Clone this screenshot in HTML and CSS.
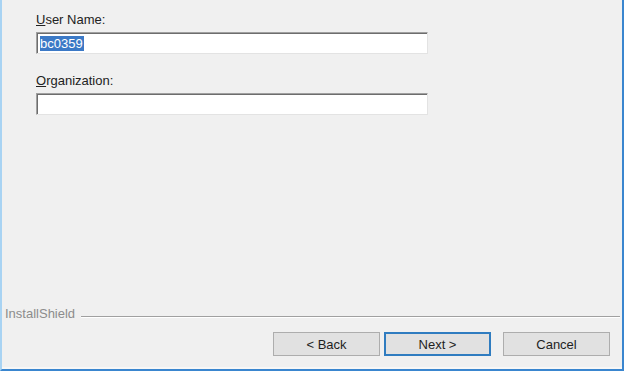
FILE: index.html
```html
<!DOCTYPE html>
<html lang="en">
<head>
  <meta charset="UTF-8" />
  <meta name="viewport" content="width=device-width, initial-scale=1.0" />
  <title>Customer Information</title>
  <link rel="stylesheet" href="styles.css">
</head>
<body>
  <div class="window">
    <div class="form">
      <div class="field-group">
        <label class="label"><u>U</u>ser Name:</label>
        <div class="field"><span class="selected">bc0359</span></div>
      </div>
      <div class="field-group">
        <label class="label"><u>O</u>rganization:</label>
        <div class="field"></div>
      </div>
    </div>

    <div class="footer">
      <div class="brand">
        <span class="brand-name">InstallShield</span>
        <span class="etched-line"></span>
      </div>
      <div class="buttons">
        <button class="btn">&lt; Back</button>
        <button class="btn btn-default">Next &gt;</button>
        <button class="btn btn-cancel">Cancel</button>
      </div>
    </div>
  </div>
</body>
</html>
```

FILE: styles.css
```css
* {
  margin: 0;
  padding: 0;
  box-sizing: border-box;
}
body {
  width: 624px;
  height: 371px;
  background: #f0f0f0;
  font-family: "Liberation Sans", Arial, sans-serif;
  font-size: 13px;
  color: #1e1e1e;
  overflow: hidden;
}
.window {
  height: 371px;
  display: flex;
  flex-direction: column;
  border-left: 2px solid #a8d3f3;
  border-right: 2px solid #3a86cf;
  border-bottom: 2px solid #3a86cf;
  box-shadow: inset 0 -2px 0 #f7f7f7;
}
.form {
  padding: 12px 0 0 34px;
}
.field-group {
  margin-bottom: 19px;
}
.label {
  display: block;
  line-height: 15px;
  margin-bottom: 5px;
  color: #222;
}
.field {
  width: 392px;
  height: 22px;
  background: #fff;
  border-top: 1px solid #a0a0a0;
  border-left: 1px solid #a0a0a0;
  border-right: 1px solid #e3e3e3;
  border-bottom: 1px solid #e3e3e3;
  box-shadow: inset 1px 1px 0 #6d6d6d;
  padding: 3px 0 0 3px;
}
.selected {
  display: inline-block;
  background: #3b79c6;
  color: #fff;
  line-height: 15px;
  padding-right: 1px;
}
.footer {
  margin-top: auto;
  padding-bottom: 13px;
}
.brand {
  display: flex;
  align-items: center;
  padding-left: 3px;
  padding-right: 2px;
}
.brand-name {
  color: #8c8c8c;
  line-height: 15px;
}
.etched-line {
  flex: 1;
  height: 2px;
  margin-left: 6px;
  margin-top: 6px;
  border-top: 1px solid #a0a0a0;
  border-bottom: 1px solid #fff;
}
.buttons {
  display: flex;
  justify-content: flex-end;
  gap: 4px;
  margin-top: 11px;
  padding-right: 12px;
}
.btn {
  width: 107px;
  height: 24px;
  background: #e1e1e1;
  border: 1px solid #adadad;
  font-family: "Liberation Sans", Arial, sans-serif;
  font-size: 13px;
  color: #1e1e1e;
}
.btn-default {
  border: 2px solid #2f7cc0;
}
.btn-cancel {
  margin-left: 8px;
}
```
